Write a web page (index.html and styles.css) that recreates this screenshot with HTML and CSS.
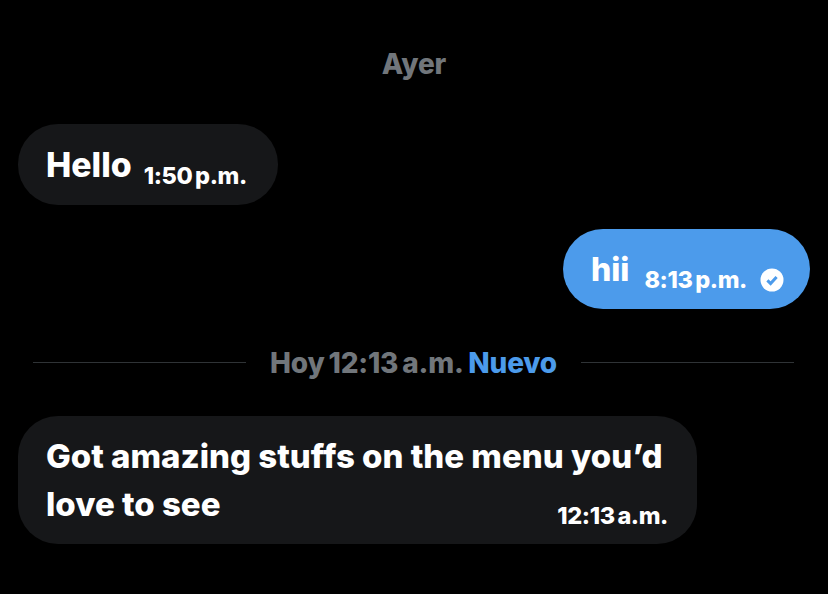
FILE: index.html
```html
<!DOCTYPE html>
<html lang="es">
<head>
<meta charset="utf-8">
<title>Mensajes</title>
<link rel="stylesheet" href="styles.css">
</head>
<body>
<main class="chat">
  <div class="day">Ayer</div>
  <div class="row">
    <div class="bubble in short">
      <span class="text">Hello</span>
      <span class="time">1:50 p.m.</span>
    </div>
  </div>
  <div class="row out">
    <div class="bubble sent short">
      <span class="text">hii</span>
      <span class="time">8:13 p.m.</span>
      <svg class="check" width="24" height="24" viewBox="0 0 24 24" aria-hidden="true">
        <circle cx="12" cy="12" r="11.5" fill="#fff"/>
        <path d="M7.4 12.4l3.2 3.2 6-6.6" fill="none" stroke="#4c9beb" stroke-width="3"/>
      </svg>
    </div>
  </div>
  <div class="divider">
    <span class="rule"></span>
    <span class="divider-label">Hoy 12:13 a.m. <span class="new">Nuevo</span></span>
    <span class="rule"></span>
  </div>
  <div class="row after-divider">
    <div class="bubble in long">
      <p class="text">Got amazing stuffs on the menu you’d<br>love to see</p>
      <span class="time end">12:13 a.m.</span>
    </div>
  </div>
</main>
</body>
</html>
```

FILE: styles.css
```css
* { box-sizing: border-box; }
html, body { margin: 0; height: 100%; background: #000; }
body { font-family: Inter, "Liberation Sans", sans-serif; font-weight: 800; color: #fff; overflow: hidden; }
.chat { display: flex; flex-direction: column; padding: 46px 18px 0; }
.day { height: 36px; line-height: 36px; text-align: center; font-size: 28px; color: #71767b; letter-spacing: -0.2px; }
.row { display: flex; margin-top: 42px; }
.row.out { justify-content: flex-end; margin-top: 24px; }
.row.after-divider { margin-top: 30px; }
.bubble { background: #161719; }
.bubble.short { display: flex; align-items: baseline; height: 81px; padding: 17px 31px 0 28px; border-radius: 40px; }
.bubble.sent { background: #4c9beb; height: 80px; padding-right: 26px; }
.bubble.long { position: relative; width: 679px; height: 128px; padding: 16px 28px 0; border-radius: 40px; }
.text { margin: 0; font-size: 33px; line-height: 48px; }
.bubble.in.short .text { font-size: 33.8px; }
.bubble.sent .text { font-size: 32px; }
.time { font-size: 23.5px; margin-left: 12px; position: relative; top: 7px; letter-spacing: -0.4px; word-spacing: -2px; }
.bubble.sent .time { margin-left: 15px; }
.time.end { position: absolute; right: 29px; top: auto; bottom: 14px; margin: 0; }
.check { align-self: center; margin-left: 13px; position: relative; top: 2px; }
.divider { display: flex; align-items: center; height: 48px; margin: 29px 16px 0 15px; gap: 24px; }
.rule { flex: 1; height: 1px; background: #2f3336; }
.divider-label { padding-top: 2px; font-size: 28px; color: #71767b; letter-spacing: -0.2px; word-spacing: -2px; }
.new { margin-left: 2px; color: #4c9beb; }
```
